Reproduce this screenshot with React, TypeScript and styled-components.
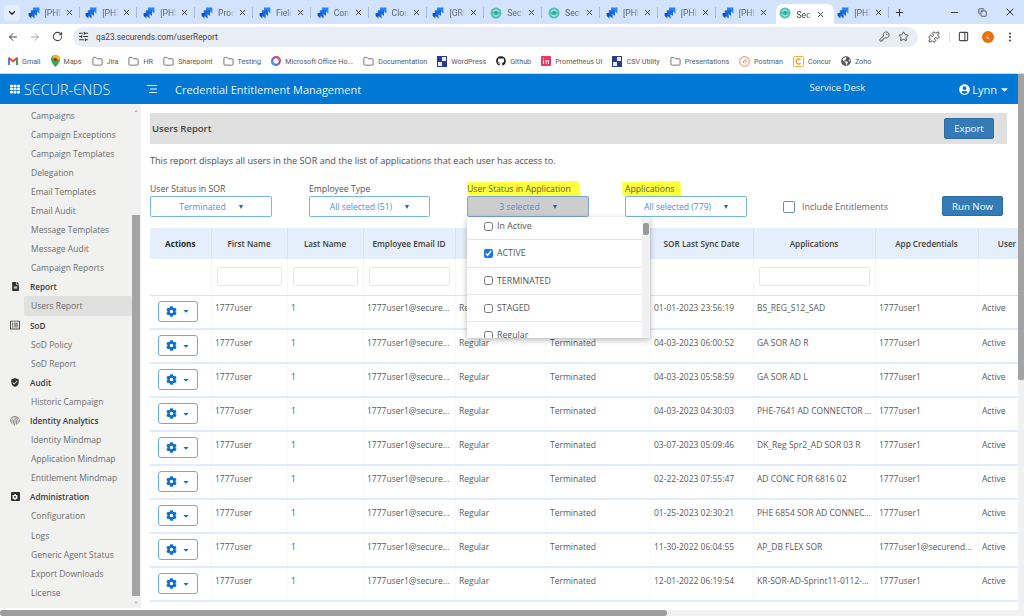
import React from "react";
import styled, { createGlobalStyle } from "styled-components";
import {
  ArrowLeft, ArrowRight, RotateCw, SlidersHorizontal, KeyRound, Star, Puzzle,
  PanelRight, MoreVertical, Folder, X, Plus, Minus, Copy, ChevronDown, AlignRight,
} from "lucide-react";
import {
  FaTh, FaUserCircle, FaCaretDown, FaFileAlt, FaRegListAlt, FaCog, FaFingerprint,
  FaGithub, FaGlobeAmericas,
} from "react-icons/fa";
import { MdVerifiedUser } from "react-icons/md";

const Global = createGlobalStyle`
  html, body { margin: 0; padding: 0; overflow: hidden; background: #fff; }
  * { box-sizing: border-box; }
  body { font-family: "Open Sans", "Liberation Sans", sans-serif; }
`;

const Frame = styled.div`
  width: 1024px; height: 616px; display: flex; flex-direction: column; overflow: hidden; background: #fff;
`;

/* Browser chrome */
const TabStrip = styled.div`
  height: 24px; background: #d3e3fd; display: flex; align-items: stretch; position: relative;
`;
const TabMenu = styled.div`
  width: 24.5px; display: flex; align-items: center; justify-content: center; color: #1f1f1f;
  & > span { width: 16px; height: 16px; margin-top: 1px; background: #e4edfb; border-radius: 4px; display: flex; align-items: center; justify-content: center; }
`;
const Tab = styled.div<{ $active?: boolean }>`
  width: 57.85px; display: flex; align-items: center; padding: 0 0 0 3px;
  margin-top: ${p => (p.$active ? 4 : 0)}px;
  background: ${p => (p.$active ? "#fff" : "transparent")};
  border-radius: 7px 7px 0 0;
  color: ${p => (p.$active ? "#3b3b3b" : "#5d6678")};
  font-family: Roboto, "Open Sans", sans-serif;
  font-size: 8.6px;
  & > svg:first-child { margin-top: ${p => (p.$active ? -3 : 1)}px; }
`;
const TabLabel = styled.span`
  width: 16px; margin-left: 5px; overflow: hidden; white-space: nowrap; margin-top: 1px;
  -webkit-mask-image: linear-gradient(90deg, #000 70%, transparent);
  mask-image: linear-gradient(90deg, #000 70%, transparent);
`;
const TabClose = styled.span`
  margin-left: 4px; width: 9px; display: flex; color: #333;
`;
const TabSep = styled.i<{ $hide?: boolean }>`
  width: 1px; height: 11px; margin-left: 5px; background: ${p => (p.$hide ? "transparent" : "#a9bbd8")};
`;
const NewTab = styled.div`
  width: 14px; display: flex; align-items: center; justify-content: center; color: #333;
`;
const WinControls = styled.div`
  margin-left: auto; display: flex; align-items: center; color: #333;
  & > span { width: 28px; display: flex; justify-content: center; }
`;
const Toolbar = styled.div`
  height: 25px; background: #fff; display: flex; align-items: center; color: #474747;
  padding-left: 2px;
`;
const NavBtn = styled.span<{ $dim?: boolean }>`
  width: 22px; display: flex; justify-content: center; color: ${p => (p.$dim ? "#a5a5a5" : "#474747")};
`;
const Omnibox = styled.div`
  margin-left: 5px; width: 845px; height: 20px; background: #e9eef6; border-radius: 10px;
  display: flex; align-items: center; padding: 0 9px 0 5px; color: #3f3f3f;
  font-family: Roboto, "Open Sans", sans-serif; font-size: 8.3px;
`;
const TuneIcon = styled.span`
  width: 12px; height: 12px; display: flex; margin-right: 6px; color: #333;
`;
const OmniRight = styled.div`
  margin-left: auto; display: flex; gap: 8px; align-items: center; color: #474747;
`;
const ToolRight = styled.div`
  display: flex; align-items: center; margin-left: 10px; color: #474747;
`;
const VDivider = styled.i`
  width: 1px; height: 12px; background: #d3e3fd; margin: 0 8px 0 9px;
`;
const Avatar = styled.span`
  width: 12px; height: 12px; border-radius: 50%; background: #e8710a; color: #fff; font-size: 6px;
  display: flex; align-items: center; justify-content: center; margin: 0 10px 0 13px;
`;
const Bookmarks = styled.div`
  height: 25px; background: #fff; border-bottom: 1px solid #d9d9d9; display: flex; align-items: center;
  padding-left: 8px; gap: 10px; font-family: Roboto, "Open Sans", sans-serif; font-size: 7.2px; color: #5a5a5a; white-space: nowrap;
`;
const Bookmark = styled.div`
  display: flex; align-items: center; gap: 4px; color: #5a5a5a;
  & > svg { flex: none; }
`;

/* App shell */
const Shell = styled.div`
  flex: 1; min-height: 0; display: flex;
`;
const ShellMain = styled.div`
  flex: 1; min-width: 0; display: flex; flex-direction: column;
`;
const AppHeader = styled.header`
  height: 30px; flex: none; background: #0078d4; color: #fff; display: flex; align-items: center; padding-left: 10px;
`;
const Logo = styled.span`
  margin-left: 4px; width: 122px; font-size: 14.2px; font-weight: 300; letter-spacing: 0.1px; white-space: nowrap; color: #f0f7fd;
`;
const AppTitle = styled.span`
  margin-left: 17px; font-size: 11px; font-weight: 500; color: #e9f3fb;
`;
const ServiceDesk = styled.span`
  margin-left: auto; font-size: 9.5px; color: #e9f3fb; margin-top: -3px;
`;
const UserMenu = styled.span`
  margin-left: 94px; margin-right: 8px; display: flex; align-items: center; gap: 2px; font-size: 11px; color: #f2f8fd;
`;
const VScroll = styled.div`
  width: 6px; flex: none; background: #f1f1f1;
`;
const VThumb = styled.div<{ $h: number }>`
  height: ${p => p.$h}px; background: #a3a3a3; border-radius: 1px;
`;
const Body = styled.div`
  flex: 1; min-height: 0; display: flex;
`;
const Sidebar = styled.aside`
  width: 141px; flex: none; height: 504px; background: #f1f1f0; display: flex;
`;
const SideList = styled.nav`
  flex: 1; min-width: 0; padding-top: 1.5px;
`;
const SideItem = styled.div<{ $active?: boolean }>`
  height: 19.1px; line-height: 19px; margin-left: 24px; padding-left: 7px;
  font-size: 8.5px; color: #6d6d6d; white-space: nowrap;
  border-radius: 2px;
  background: ${p => (p.$active ? "#e0e0e0" : "transparent")};
`;
const SideHead = styled.div`
  height: 19.1px; display: flex; align-items: center; font-size: 8.2px; font-weight: 600; color: #3a3a3a; white-space: nowrap;
  padding-left: 10px;
`;
const SideIcon = styled.span`
  width: 10px; height: 10px; margin-right: 10px; display: flex; align-items: center; justify-content: center; color: #333;
`;
const AdminBadge = styled.span`
  width: 9px; height: 9px; background: #2f2f2f; border-radius: 1px; display: flex; align-items: center; justify-content: center; color: #fff;
`;
const SideScroll = styled.div`
  width: 8px; flex: none; margin-right: 1px; background: #f1f1f1; display: flex; flex-direction: column; align-items: center;
`;
const ScrollArrowSlot = styled.div`
  height: 12px; flex: none; width: 100%; display: flex; align-items: center; justify-content: center; color: #a9a9a9; font-size: 4px;
`;
const SideThumb = styled.div`
  width: 100%; height: 381px; margin-top: auto; background: #a3a3a3;
`;
const HScroll = styled.div`
  height: 6px; flex: none; background: #f1f1f1; margin-top: 2px;
`;
const HThumb = styled.div<{ $w: number }>`
  width: ${p => p.$w}px; height: 100%; background: #9d9d9d; border-radius: 3px;
`;
const Content = styled.main`
  flex: 1; min-width: 0; overflow: hidden; padding: 9px 11px 0 9px; background: #fff; height: 504px;
`;
const TitleBar = styled.div`
  height: 31px; background: #e0e0e0; display: flex; align-items: center; justify-content: space-between; padding: 0 13px 0 2px;
`;
const PageTitle = styled.h1`
  margin: 0; font-size: 9.5px; font-weight: 600; color: #444;
`;
const ExportBtn = styled.button`
  width: 50px; height: 21px; border: 1px solid #2e6da4; border-radius: 2px; background: #337ab7; color: #fff;
  font-family: inherit; font-size: 9.7px; padding: 0;
`;
const Description = styled.p`
  margin: 9px 0 0; font-size: 9.15px; line-height: 15px; color: #4d4d4d;
`;
const FilterBar = styled.div`
  margin-top: 12px; margin-bottom: 11px; display: flex; align-items: flex-end; padding-right: 4px;
`;
const Field = styled.div<{ $w: number }>`
  width: ${p => p.$w}px; flex: none; position: relative;
`;
const FieldLabel = styled.label`
  display: block; height: 16px; line-height: 18px; font-size: 8.7px; color: #555; white-space: nowrap;
`;
const Marked = styled.span`
  display: inline-block; height: 15px; line-height: 17px; background: #ffff3c; color: #5b5b2c; padding-right: 10px;
  clip-path: polygon(0 8%, 98% 0, 100% 100%, 1% 96%);
`;
const MarkedShift = styled(Marked)`
  margin-left: -3px; padding: 0 7px 0 3px;
`;
const SelectBox = styled.div<{ $open?: boolean; $w: number }>`
  width: ${p => p.$w}px; height: 21px; border: 1px solid ${p => (p.$open ? "#74a6d8" : "#78b7ec")}; border-radius: 2px;
  background: ${p => (p.$open ? "#cdcdcd" : "#fff")}; color: #4f90dc; font-size: 8.6px;
  display: flex; align-items: center; justify-content: center; gap: 13px;
`;
const Tri = styled.i`
  width: 0; height: 0; border-left: 2.5px solid transparent; border-right: 2.5px solid transparent;
  border-top: 4px solid #1b68b5;
`;
const Dropdown = styled.div`
  position: absolute; top: 100%; left: 0; width: 183px; height: 121px; z-index: 5; background: #fff;
  box-shadow: 0 2px 6px rgba(0,0,0,.28); display: flex; overflow: hidden;
`;
const DropList = styled.div`
  flex: 1; margin-top: -4px;
`;
const DropItem = styled.div`
  height: 27.3px; border-bottom: 1px solid #e6e6e6; display: flex; align-items: center; gap: 4px; padding-left: 17px;
  font-size: 8.8px; color: #555;
`;
const TinyCheck = styled.input`
  width: 9px; height: 9px; margin: 0; accent-color: #1a73e8; flex: none;
`;
const DropScroll = styled.div`
  width: 8px; flex: none; background: #f1f1f1; padding: 6px 1px 0;
`;
const DropThumb = styled.div`
  height: 12px; background: #9a9a9a; border-radius: 2px;
`;
const EntCheck = styled.label`
  width: 159px; flex: none; display: flex; align-items: center; gap: 7px; height: 21px; font-size: 9px; color: #666;
`;
const BigCheck = styled.input`
  appearance: none; width: 12px; height: 12px; margin: 0; border: 1px solid #6a8fb0; border-radius: 2px; background: #fff;
`;
const RunBtn = styled.button`
  margin-left: auto; width: 61px; height: 20px; margin-bottom: 1px; border: 1px solid #2e6da4; border-radius: 2px; background: #337ab7; color: #fff;
  font-family: inherit; font-size: 9.7px; padding: 0;
`;
const Table = styled.table`
  table-layout: fixed; border-collapse: collapse; width: 913px; font-size: 8.5px; color: #5a5a5a;
`;
const Th = styled.th<{ $strong?: boolean }>`
  height: 31px; background: #e5effb; font-size: 8.2px; font-weight: ${p => (p.$strong ? 700 : 600)};
  color: ${p => (p.$strong ? "#222" : "#3b3b3b")}; text-align: center; padding: 0 2px; white-space: nowrap; overflow: hidden;
  border-right: 1px solid #d3e2f4;
`;
const FilterTd = styled.td`
  height: 36px; padding: 0 5px; border-right: 1px solid #f5f7fa; border-bottom: 1px solid #d6e6f7;
`;
const HeadInput = styled.input`
  display: block; width: 100%; height: 19px; border: 1px solid #e7e7e7; border-radius: 2px; background: #fff;
`;
const Td = styled.td`
  height: 34px; padding: 6.5px 3px 0 3.5px; vertical-align: top; white-space: nowrap; overflow: hidden; text-overflow: ellipsis;
  border-bottom: 2px solid #e1ecf8; border-right: 1px solid #f7f8fa; line-height: 12px;
`;
const ActionTd = styled(Td)`
  padding: 5px 0 0 8px;
`;
const GearBtn = styled.button`
  width: 40px; height: 21px; border: 1px solid #69aceb; border-radius: 3px; background: #fff; color: #0d6fc8; padding: 0;
  display: flex; align-items: center; justify-content: center; gap: 5px;
`;

const jira = (
  <svg width="12" height="12" viewBox="0 0 12 12">
    <path d="M5 .6h6.4L8 4.2H5z M8.3 0.6 11.4 .6 11.4 6.4 8.3 3.8z" fill="#2684ff" />
    <path d="M2.8 3.3h6.2L5.7 7H2.8z M6 3.3h3v5.6L6 6.4z" fill="#1a6be0" />
    <path d="M.6 6h6L3.4 9.4v2L.6 8.7z" fill="#0b52c4" />
    <path d="M3.6 6.2h3v5.4L3.6 9z" fill="#1a6be0" />
  </svg>
);
const secu = (
  <svg width="12" height="12" viewBox="0 0 12 12">
    <circle cx="6" cy="6" r="5.5" fill="#4cc3b4" />
    <path d="M3 4.5c1-2 5-2 6 0M3 7.5c1 2 5 2 6 0" stroke="#d7f3ef" strokeWidth="1" fill="none" />
    <circle cx="6" cy="6" r="1.4" fill="#2a9f92" />
  </svg>
);
const tabs: [string, "j" | "s", boolean?][] = [
  ["[PHE", "j"], ["[PHE", "j"], ["[PHE", "j"], ["Proc", "j"], ["Field", "j"], ["Conf", "j"], ["Clou", "j"], ["[GRC", "j"],
  ["Secu", "s"], ["Secu", "s"], ["[PHE", "j"], ["[PHE", "j"], ["[PHE", "j"], ["Secu", "s", true], ["[PHE", "j"],
];

const folder = <Folder size={11} strokeWidth={1.6} color="#444" />;
const gmail = (
  <svg width="10" height="8" viewBox="0 0 10 8"><path d="M0 1v7h2V3l3 2.4L8 3v5h2V1L8.8 0 5 3 1.2 0z" fill="#ea4335" /><path d="M0 1v7h2V3z" fill="#4285f4" /><path d="M8 3v5h2V1z" fill="#34a853" /></svg>
);
const maps = (
  <svg width="9" height="12" viewBox="0 0 9 12"><path d="M4.5 0C2 0 0 2 0 4.4 0 7.5 4.5 12 4.5 12S9 7.5 9 4.4C9 2 7 0 4.5 0z" fill="#34a853" /><path d="M1 2 4.5 0C7 0 9 2 9 4.4L5 5z" fill="#fbbc04" /><circle cx="4.5" cy="4.4" r="1.6" fill="#c5221f" /></svg>
);
const ms = (
  <svg width="10" height="10" viewBox="0 0 10 10"><circle cx="5" cy="5" r="3.8" fill="none" stroke="#7b5bd6" strokeWidth="2.2" /><path d="M5 1a4 4 0 0 1 4 4" stroke="#e2574c" strokeWidth="2" fill="none" /><path d="M1 5a4 4 0 0 0 3 3.9" stroke="#2fa3e6" strokeWidth="2" fill="none" /></svg>
);
const sq = (
  <svg width="10" height="11" viewBox="0 0 10 11"><rect width="10" height="11" fill="#2a3b96" /><path d="M5 1h4v4H5zM1 6h4v4H1z" fill="#e9ecf8" /></svg>
);
const inv = (
  <svg width="10" height="10" viewBox="0 0 10 10"><rect width="10" height="10" rx="1" fill="#f0375f" /><path d="M2 4h1v4H2zM2 2h1v1H2zM4.5 4H5.5v.7C6 4 8 3.7 8 5.5V8H7V5.8C7 4.8 5.5 5 5.5 6V8h-1z" fill="#fff" /></svg>
);
const postman = (
  <svg width="11" height="11" viewBox="0 0 11 11"><circle cx="5.5" cy="5.5" r="4.8" fill="#fff" stroke="#f0855a" strokeWidth="1" /><path d="M7.5 3 4 6l1.5 1.5M5.8 4.5 8 6.5" stroke="#f0855a" strokeWidth="1" fill="none" /></svg>
);
const concur = (
  <svg width="11" height="11" viewBox="0 0 11 11"><rect x=".5" y=".5" width="10" height="10" rx="1" fill="#fff" stroke="#f3b23a" /><path d="M7.5 3.8a2.5 2.5 0 1 0 0 3.4" stroke="#f3a01f" strokeWidth="1.5" fill="none" /></svg>
);

const bookmarks: [string, React.ReactNode][] = [
  ["Gmail", gmail], ["Maps", maps], ["Jira", folder], ["HR", folder], ["Sharepoint", folder], ["Testing", folder],
  ["Microsoft Office Ho...", ms], ["Documentation", folder], ["WordPress", sq],
  ["Github", <FaGithub size={10} color="#222" />], ["Prometheus UI", inv], ["CSV Utility", sq], ["Presentations", folder],
  ["Postman", postman], ["Concur", concur], ["Zoho", <FaGlobeAmericas size={10} color="#555" />],
];

type SideEntry = { t: string; head?: React.ReactNode; active?: boolean };
const side: SideEntry[] = [
  { t: "Campaigns" }, { t: "Campaign Exceptions" }, { t: "Campaign Templates" }, { t: "Delegation" },
  { t: "Email Templates" }, { t: "Email Audit" }, { t: "Message Templates" }, { t: "Message Audit" },
  { t: "Campaign Reports" },
  { t: "Report", head: <FaFileAlt size={9} /> },
  { t: "Users Report", active: true },
  { t: "SoD", head: <FaRegListAlt size={10} color="#444" /> },
  { t: "SoD Policy" }, { t: "SoD Report" },
  { t: "Audit", head: <MdVerifiedUser size={11} /> },
  { t: "Historic Campaign" },
  { t: "Identity Analytics", head: <FaFingerprint size={10} color="#8d8d8d" /> },
  { t: "Identity Mindmap" }, { t: "Application Mindmap" }, { t: "Entitlement Mindmap" },
  { t: "Administration", head: <AdminBadge><FaCog size={6} /></AdminBadge> },
  { t: "Configuration" }, { t: "Logs" }, { t: "Generic Agent Status" }, { t: "Export Downloads" }, { t: "License" },
];

const colWidths = [61, 76, 76, 92, 91, 104, 103, 122, 103, 85];
const rows: [string, string, string?][] = [
  ["01-01-2023 23:56:19", "BS_REG_S12_SAD"],
  ["04-03-2023 06:00:52", "GA SOR AD R"],
  ["04-03-2023 05:58:59", "GA SOR AD L"],
  ["04-03-2023 04:30:03", "PHE-7641 AD CONNECTOR ..."],
  ["03-07-2023 05:09:46", "DK_Reg Spr2_AD SOR 03 R"],
  ["02-22-2023 07:55:47", "AD CONC FOR 6816 02"],
  ["01-25-2023 02:30:21", "PHE 6854 SOR AD CONNEC..."],
  ["11-30-2022 06:04:55", "AP_DB FLEX SOR", "1777user1@securend..."],
  ["12-01-2022 06:19:54", "KR-SOR-AD-Sprint11-0112-..."],
];
const statusOptions: [string, boolean][] = [
  ["In Active", false], ["ACTIVE", true], ["TERMINATED", false], ["STAGED", false], ["Regular", false],
];

export default function App() {
  return (
    <Frame>
      <Global />
      <TabStrip>
        <TabMenu><span><ChevronDown size={10} strokeWidth={3} /></span></TabMenu>
        {tabs.map(([label, kind, active], i) => (
          <Tab key={i} $active={active}>
            {kind === "j" ? jira : secu}
            <TabLabel>{label}</TabLabel>
            <TabClose><X size={9} strokeWidth={2.4} /></TabClose>
            <TabSep $hide={active || i === 12} />
          </Tab>
        ))}
        <NewTab><Plus size={11} strokeWidth={2.2} /></NewTab>
        <WinControls>
          <span><Minus size={11} /></span>
          <span><Copy size={9} strokeWidth={2} /></span>
          <span><X size={12} /></span>
        </WinControls>
      </TabStrip>
      <Toolbar>
        <NavBtn><ArrowLeft size={12} strokeWidth={2} /></NavBtn>
        <NavBtn $dim><ArrowRight size={12} strokeWidth={2} /></NavBtn>
        <NavBtn><RotateCw size={11} strokeWidth={2.2} /></NavBtn>
        <Omnibox>
          <TuneIcon><SlidersHorizontal size={11} strokeWidth={2.2} /></TuneIcon>
          <span>qa23.securends.com/userReport</span>
          <OmniRight>
            <KeyRound size={11} strokeWidth={2} />
            <Star size={11} strokeWidth={2} />
          </OmniRight>
        </Omnibox>
        <ToolRight>
          <Puzzle size={12} strokeWidth={2} />
          <VDivider />
          <PanelRight size={11} strokeWidth={2.4} />
          <Avatar>L</Avatar>
          <MoreVertical size={12} strokeWidth={2.4} />
        </ToolRight>
      </Toolbar>
      <Bookmarks>
        {bookmarks.map(([t, icon]) => (
          <Bookmark key={t}>{icon}<span>{t}</span></Bookmark>
        ))}
      </Bookmarks>
      <Shell>
        <ShellMain>
          <AppHeader>
            <FaTh size={10} />
            <Logo>SЄCUR-ЄNDS</Logo>
            <AlignRight size={12} strokeWidth={2} />
            <AppTitle>Credential Entitlement Management</AppTitle>
            <ServiceDesk>Service Desk</ServiceDesk>
            <UserMenu><FaUserCircle size={11} />Lynn<FaCaretDown size={11} /></UserMenu>
          </AppHeader>
          <Body>
            <Sidebar>
              <SideList>
                {side.map(e =>
                  e.head ? (
                    <SideHead key={e.t}><SideIcon>{e.head}</SideIcon>{e.t}</SideHead>
                  ) : (
                    <SideItem key={e.t} $active={e.active}>{e.t}</SideItem>
                  ),
                )}
              </SideList>
              <SideScroll>
                <ScrollArrowSlot>▲</ScrollArrowSlot>
                <SideThumb />
                <ScrollArrowSlot>▼</ScrollArrowSlot>
              </SideScroll>
            </Sidebar>
            <Content>
              <TitleBar>
                <PageTitle>Users Report</PageTitle>
                <ExportBtn>Export</ExportBtn>
              </TitleBar>
              <Description>
                This report displays all users in the SOR and the list of applications that each user has access to.
              </Description>
              <FilterBar>
                <Field $w={159}>
                  <FieldLabel>User Status in SOR</FieldLabel>
                  <SelectBox $w={122}>Terminated <Tri /></SelectBox>
                </Field>
                <Field $w={158}>
                  <FieldLabel>Employee Type</FieldLabel>
                  <SelectBox $w={121}>All selected (51) <Tri /></SelectBox>
                </Field>
                <Field $w={158}>
                  <FieldLabel><Marked>User Status in Application</Marked></FieldLabel>
                  <SelectBox $open $w={122}>3 selected <Tri /></SelectBox>
                  <Dropdown>
                    <DropList>
                      {statusOptions.map(([label, on]) => (
                        <DropItem key={label}>
                          <TinyCheck type="checkbox" defaultChecked={on} />
                          {label}
                        </DropItem>
                      ))}
                    </DropList>
                    <DropScroll><DropThumb /></DropScroll>
                  </Dropdown>
                </Field>
                <Field $w={158}>
                  <FieldLabel><MarkedShift>Applications</MarkedShift></FieldLabel>
                  <SelectBox $w={122}>All selected (779) <Tri /></SelectBox>
                </Field>
                <EntCheck><BigCheck type="checkbox" />Include Entitlements</EntCheck>
                <RunBtn>Run Now</RunBtn>
              </FilterBar>
              <Table>
                <colgroup>
                  {colWidths.map((w, i) => <col key={i} width={w} />)}
                </colgroup>
                <thead>
                  <tr>
                    <Th $strong>Actions</Th>
                    <Th>First Name</Th>
                    <Th>Last Name</Th>
                    <Th>Employee Email ID</Th>
                    <Th />
                    <Th />
                    <Th>SOR Last Sync Date</Th>
                    <Th>Applications</Th>
                    <Th>App Credentials</Th>
                    <Th>User Status</Th>
                  </tr>
                  <tr>
                    <FilterTd />
                    <FilterTd><HeadInput /></FilterTd>
                    <FilterTd><HeadInput /></FilterTd>
                    <FilterTd><HeadInput /></FilterTd>
                    <FilterTd />
                    <FilterTd />
                    <FilterTd />
                    <FilterTd><HeadInput /></FilterTd>
                    <FilterTd />
                    <FilterTd />
                  </tr>
                </thead>
                <tbody>
                  {rows.map(([date, app, cred]) => (
                    <tr key={date}>
                      <ActionTd>
                        <GearBtn><FaCog size={11} /><FaCaretDown size={8} /></GearBtn>
                      </ActionTd>
                      <Td>1777user</Td>
                      <Td>1</Td>
                      <Td>1777user1@secure...</Td>
                      <Td>Regular</Td>
                      <Td>Terminated</Td>
                      <Td>{date}</Td>
                      <Td>{app}</Td>
                      <Td>{cred || "1777user1"}</Td>
                      <Td>Active</Td>
                    </tr>
                  ))}
                </tbody>
              </Table>
            </Content>
          </Body>
          <HScroll><HThumb $w={667} /></HScroll>
        </ShellMain>
        <VScroll><VThumb $h={306} /></VScroll>
      </Shell>
    </Frame>
  );
}
